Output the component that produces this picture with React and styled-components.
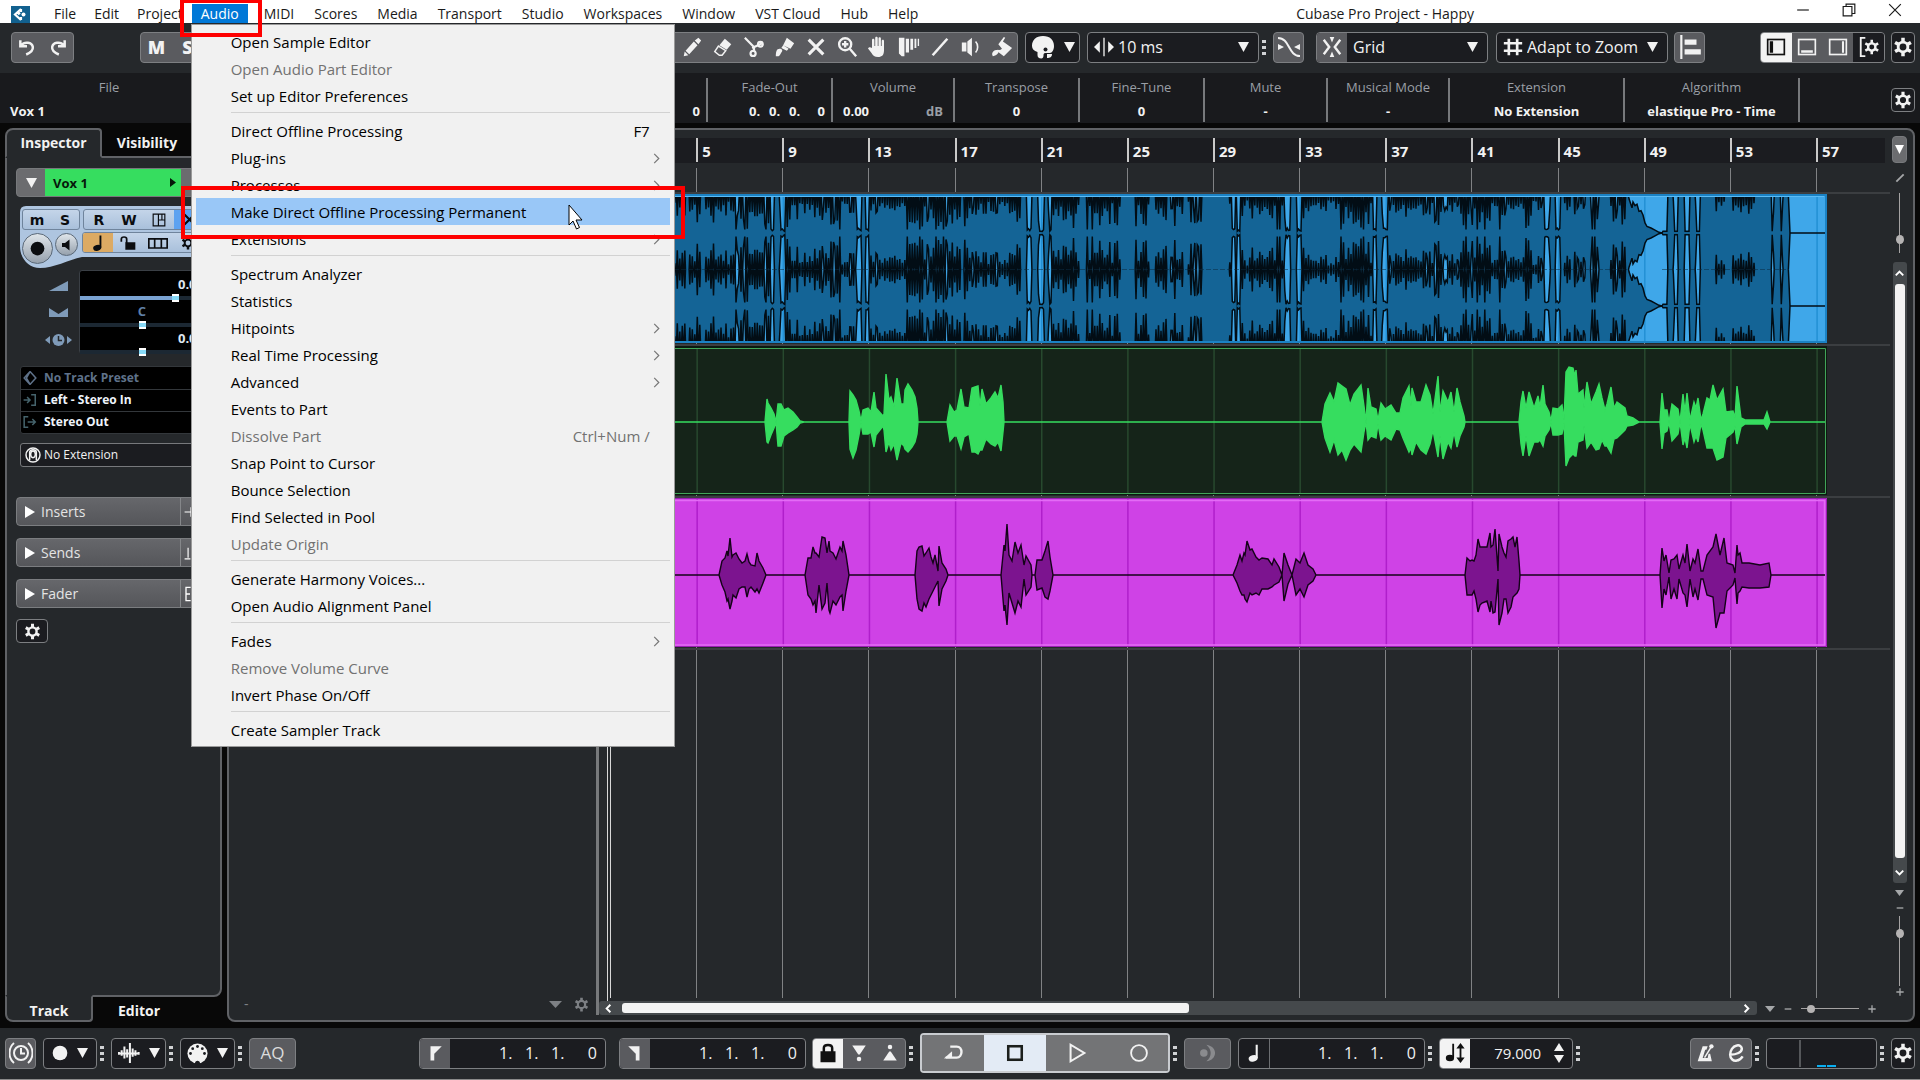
import React from "react";
import styled, { createGlobalStyle, css } from "styled-components";

const Global = createGlobalStyle`
  * { box-sizing: border-box; }
  html, body { margin: 0; height: 100%; overflow: hidden; }
  body { background: #080808; color: #f2f2f2; font: 14px/20px "Open Sans", "Noto Sans", sans-serif; }
  button, select, input { font: inherit; color: inherit; margin: 0; padding: 0; border: 0; background: none; outline: none; }
  svg { display: block; flex: none; }
`;

const panel = "#25282b";
const well = "#1b1c20";
const edge = "#606266";
const rim = "#7d7f82";
const raised = "#5a5b5f";

/* ---------- icons ---------- */

const Icon = ({ size = 20, box = 24, children, fill = "currentColor", stroke = "none", sw = 2 }) => (
  <svg width={size} height={size} viewBox={`0 0 ${box} ${box}`} fill={fill} stroke={stroke} strokeWidth={sw} aria-hidden="true">
    {children}
  </svg>
);
const line = { fill: "none", stroke: "currentColor" };

const Undo = () => <Icon size={20} {...line} sw={3}><path d="M4 4v7h8M5 10c4-5 13-4 14 2 .5 4-3 7-8 9" /></Icon>;
const Redo = () => <Icon size={20} {...line} sw={3}><path d="M20 4v7h-8M19 10c-4-5-13-4-14 2-.5 4 3 7 8 9" /></Icon>;
const Pencil = () => <Icon size={22}><path d="M19 2l3 3-3 4-4-4zM14 6l4 4-9 10-4-4zM4 17l4 4-5 1z" /></Icon>;
const Eraser = () => <Icon size={22}><path d="M14 3l7 6-5 6-8-5z" /><path d="M7 11l8 5-4 5-3 0-5-4z" {...line} strokeWidth="1.6" /></Icon>;
const Scissors = () => <Icon size={22} {...line} sw={2.4}><path d="M2 2l11 11M21 8l-11 5M12 12v5" /><circle cx="19" cy="9" r="2.6" /><circle cx="11" cy="19" r="2.8" /></Icon>;
const Glue = () => <Icon size={22}><path d="M14 2l8 6-4 6-8-4zM10 10l6 4-2 2-6-3zM2 22c0-5 1-8 4-8s4 2 2 4c-1 2-2 4-3 4z" /></Icon>;
const Cross = ({ size = 22 }) => <Icon size={size} {...line} sw={3.4}><path d="M4 4l16 16M20 4L4 20" /></Icon>;
const Zoom = () => <Icon size={22} {...line} sw={2.6}><circle cx="10" cy="9" r="6.6" /><path d="M15 14l7 8M10 5.500v7M6.500 9h7" /></Icon>;
const Hand = () => <Icon size={24}><path d="M6 13V5c0-1.600 2.400-1.600 2.400 0v6h.8V3c0-1.700 2.500-1.700 2.500 0v8h.8V3.500c0-1.600 2.400-1.600 2.400 0V11h.8V6c0-1.600 2.300-1.600 2.300 0v9c0 5-2 7-6 7-3.500 0-5-1.500-6.500-4L2 13.500c1-1.800 2.500-1.300 4-.5z" /></Icon>;
const Comp = () => <Icon size={22}><path d="M1 2h6v20H4L1 19zM8.500 3h3.500v15H8.500zM13.500 3h3v12h-3zM18 3h2v10h-2zM21.500 3h1.500v8h-1.500z" /></Icon>;
const Slash = () => <Icon size={22} {...line} sw={2.8}><path d="M4 21L20 3" /></Icon>;
const Speaker = ({ size = 22 }) => <Icon size={size}><path d="M2 7h5v10H2zM8 6l5-4v20l-5-4z" /><path d="M17 6c3 3 3 9 0 12" {...line} strokeWidth="1.8" /></Icon>;
const Bucket = () => <Icon size={22}><path d="M8 9l6-8 1.500 1L13 6l10 7-9 9-8-6c2-1 4 0 6-2zM2 22c-2-3 0-7 6-7 1 3-1 6-6 7z" /></Icon>;
const Palette = () => <Icon size={24}><path d="M12 1c7 0 11 4 11 10 0 4-2 7-4 7h-5c-1 0-1.500 1-1.500 2s0 3-2 3.500c-3 0-4-1.500-4-3.500v-3C3 16 1 14 1 11 1 5 5 1 12 1z" /><path d="M16 19h5c0 3-2 4-5 4z" /><circle cx="14.500" cy="14.500" r="2" fill={well} /></Icon>;
const Nudge = () => <Icon size={20}><path d="M0 12l7-7v14zM24 12l-7-7v14zM11.200 1h1.600v22h-1.600z" /></Icon>;
const Crossfade = () => <Icon size={24} {...line} sw={2}><path d="M1 3c12 0 10 18 22 18" /><path d="M1 9l6 3-6 3zM23 9l-6 3 6 3z" fill="currentColor" stroke="none" /></Icon>;
const Snap = () => <Icon size={22} {...line} sw={2.600}><path d="M3 4l6 8-6 8M21 4l-6 8 6 8" /><path d="M9.500 1h5L12 7zM9.500 23h5L12 17z" fill="currentColor" stroke="none" /></Icon>;
const Hash = () => <Icon size={20} {...line} sw={3.2}><path d="M7 2v20M17 2v20M1 7.500h22M1 16.500h22" /></Icon>;
const Align = () => <Icon size={26}><path d="M3 1h2v22H3zM7 5h11v5H7zM7 14h15v5H7z" /></Icon>;
const Gear = ({ size = 20 }) => (
  <Icon size={size} {...line} sw={3.400}>
    <circle cx="12" cy="12" r="5.800" />
    <path d="M12 1v4.500M12 18.500v4.500M2.500 6.500l4 2.300M17.500 15.200l4 2.300M2.500 17.500l4-2.300M17.500 8.800l4-2.300" strokeWidth="4.200" />
  </Icon>
);
const ZoneLeft = () => <Icon size={20} {...line} sw={2}><rect x="2" y="3" width="20" height="18" /><path d="M6.500 5v14" strokeWidth="4" /></Icon>;
const ZoneLow = () => <Icon size={20} {...line} sw={2}><rect x="2" y="3" width="20" height="18" /><path d="M5 17.500h14" strokeWidth="3" /></Icon>;
const ZoneRight = () => <Icon size={20} {...line} sw={2}><rect x="2" y="3" width="20" height="18" /><path d="M18 5v14" strokeWidth="2.500" /></Icon>;
const ZoneGear = () => <Icon size={22} {...line} sw={2}><path d="M8 2H3v20h5" /><circle cx="15" cy="12" r="4" strokeWidth="2.600" /><path d="M15 4v4M15 16v4M8 8l3.500 2M18.500 14l3.500 2M8 16l3.500-2M18.500 10l3.500-2" strokeWidth="2.800" /></Icon>;
const Clock = () => <Icon size={24} {...line} sw={2}><circle cx="12" cy="12" r="7" /><path d="M12 7v5.500h4M5 2C-1 7-1 17 5 22M19 2c6 5 6 15 0 20" /></Icon>;
const Dot = () => <Icon size={16}><circle cx="12" cy="12" r="11" /></Icon>;
const Wave = () => <Icon size={22} {...line} sw={2.200}><path d="M1 11v3M4 9v6M7 5v13M10 8v9M13 1v22M16 7v9M19 9v6M22.500 11v3M1 12.500h22" /></Icon>;
const Midi = () => <Icon size={21}><circle cx="12" cy="12" r="11.500" /><path d="M9 24c0-5 6-5 6 0z" fill={well} /><g fill={well}><circle cx="4" cy="12" r="1.600" /><circle cx="6.500" cy="6.500" r="1.600" /><circle cx="12" cy="4" r="1.600" /><circle cx="17.500" cy="6.500" r="1.600" /><circle cx="20" cy="12" r="1.600" /></g></Icon>;
const FlagL = () => <Icon size={18}><path d="M6 3h15L11 13v9H6z" /></Icon>;
const FlagR = () => <Icon size={18}><path d="M18 3H3l10 10v9h5z" /></Icon>;
const Lock = () => <Icon size={20}><path d="M3 10h18v13H3z" /><path d="M7 11V6c0-5 10-5 10 0v5" {...line} strokeWidth="3" /></Icon>;
const PunchIn = () => <Icon size={18}><path d="M3 2h18l-8 12h-2z" /><circle cx="12" cy="20" r="3" /></Icon>;
const PunchOut = () => <Icon size={18}><path d="M3 22h18l-8-12h-2z" /><circle cx="12" cy="4" r="3" /></Icon>;
const Cycle = () => <Icon size={22} {...line} sw={2.6}><path d="M9 5h7c7 0 7 12 0 12H4" /><path d="M2 18l9-8v7z" fill="currentColor" stroke="none" /></Icon>;
const Stop = () => <Icon size={18} {...line} sw={3.400}><rect x="3" y="3" width="18" height="18" /></Icon>;
const Play = () => <Icon size={22} {...line} sw={2.200}><path d="M5 3v18l15-9z" /></Icon>;
const Ring = () => <Icon size={20} {...line} sw={2.200}><circle cx="12" cy="12" r="9.500" /></Icon>;
const Ghost = () => <Icon size={20}><circle cx="7" cy="12" r="4.500" /><path d="M10 2c14 2 14 18 0 20 7-6 7-14 0-20z" /></Icon>;
const Note = ({ size = 20 }) => <Icon size={size}><path d="M14 2h2.500v16h-2.500z" /><ellipse cx="11" cy="18.500" rx="5.500" ry="3.800" transform="rotate(-15 11 18.500)" /></Icon>;
const TempoTrack = () => <Icon size={22}><path d="M9 2h2v15H9z" /><ellipse cx="6.500" cy="17.500" rx="4.500" ry="3.500" /><path d="M18 1l4.500 6H19v10h3.500L18 23l-4.500-6H17V7h-3.500z" /></Icon>;
const Metronome = () => <Icon size={20}><path d="M8 4h6l-1.500 4H11L8 18h6l1-5h2l2 9H2z" /><circle cx="18.500" cy="4" r="2.600" /><path d="M17 5l1.500 1L11 18l-1.500-1z" /></Icon>;
const ClickE = () => <Icon size={20} {...line} sw={3}><path d="M5 14c8 0 14-3 14-7 0-3-3-5-6-4C8 4 5 9 5 14s4 8 8 7c3 0 5-2 7-5" /></Icon>;
const DoubleRing = () => <Icon size={16} {...line} sw={2.200}><circle cx="12" cy="12" r="10.500" /><ellipse cx="12" cy="11" rx="3.500" ry="5" /><path d="M7 20V8c0-5 10-5 10 0v12" /></Icon>;
const Minimise = () => <Icon size={14} {...line} sw={2}><path d="M2 12h20" /></Icon>;
const Restore = () => <Icon size={14} {...line} sw={2}><path d="M2 6h15v16H2zM7 6V2h15v16h-5" /></Icon>;
const Close = () => <Icon size={14} {...line} sw={2}><path d="M2 2l20 20M22 2L2 22" /></Icon>;
const Down = ({ w = 11, h = 10 }) => <svg width={w} height={h} viewBox="0 0 10 10" fill="currentColor" preserveAspectRatio="none" aria-hidden="true"><path d="M0 0h10L5 10z" /></svg>;
const Right = () => <svg width="10" height="12" viewBox="0 0 10 12" fill="currentColor" aria-hidden="true"><path d="M0 0v12l10-6z" /></svg>;
const Chevron = ({ turn = 0, size = 10, sw = 3 }) => <Icon size={size} {...line} sw={sw}><path d="M7 2l10 10L7 22" transform={`rotate(${turn} 12 12)`} /></Icon>;
const Plus = () => <Icon size={8} {...line} sw={4}><path d="M12 1v22M1 12h22" /></Icon>;
const Minus = () => <Icon size={8} {...line} sw={4}><path d="M2 12h20" /></Icon>;
const Logo = () => (
  <svg width="19" height="17" viewBox="0 0 19 17" aria-hidden="true">
    <rect width="19" height="17" fill="#12618f" />
    <path d="M10 3L4 8.500l6 5.500M10 3v3M10 14v-3M7 8.500l2-2" stroke="#fff" strokeWidth="2.200" fill="none" />
    <circle cx="12.500" cy="8.500" r="2" fill="#fff" />
  </svg>
);

/* ---------- shared controls ---------- */

const Shell = styled.div`
  position: relative; display: flex; flex-direction: column; height: 100vh; overflow: hidden;
`;
const Group = styled.div`
  display: flex; align-items: stretch; height: 31px; flex: none; width: ${p => p.$w}px;
  border: 1px solid ${rim}; border-radius: 4px; overflow: hidden;
  background: ${p => (p.$raised ? raised : well)};
`;
const Seg = styled.button`
  display: flex; align-items: center; justify-content: center; flex: ${p => (p.$grow ? 1 : "none")};
  width: ${p => (p.$grow ? "auto" : (p.$w || 31) + "px")}; gap: 9px;
  font-weight: 800; font-size: 18px;
  color: ${p => p.$ink || "#f2f2f2"};
  background: ${p => p.$bg || "transparent"};
`;
const SquareButton = styled.button`
  display: flex; align-items: center; justify-content: center; flex: none;
  width: ${p => p.$w || 24}px; height: ${p => p.$h || 31}px;
  border: 1px solid ${rim}; border-radius: 4px; font-size: 17px;
  color: ${p => p.$ink || "#f2f2f2"}; background: ${p => (p.$raised ? raised : well)};
`;
const DotsBox = styled.span`
  display: grid; gap: 3px; width: 14px; flex: none; padding-left: 3px; align-content: center;
  i { width: 4px; height: 3px; background: #d0d2d4; }
`;
const Dots = () => <DotsBox><i /><i /><i /></DotsBox>;

const SelectLabel = styled.label`
  display: flex; align-items: center; flex: 1; gap: 4px; padding: 0 9px 0 6px;
`;
const Select = styled.select`
  appearance: none; flex: 1; min-width: 0; font-size: 16px; line-height: 20px;
`;
const Pick = ({ icon, label, value }) => (
  <SelectLabel>
    {icon}
    <Select aria-label={label} defaultValue={value}><option>{value}</option></Select>
    <Down />
  </SelectLabel>
);
const Spacer = styled.div` flex: 1; `;
const VGap = styled.div` height: ${p => p.$h}px; flex: none; `;

/* ---------- menu bar ---------- */

const MenuBar = styled.header`
  position: relative; z-index: 5; display: flex; height: 23px; flex: none; align-items: flex-end;
  background: #fff; color: #1a1a1a; padding-left: 11px;
`;
const MenuItems = styled.nav` display: flex; padding-left: 15px; `;
const MenuSlot = styled.div` position: relative; margin-right: ${p => (p.$open ? 6 : 0)}px; `;
const MenuButton = styled.button`
  display: block; height: 19px; padding: 0 ${p => (p.$wide ? 10 : 9)}px; line-height: 18px; white-space: nowrap; font-size: 14px;
  ${p => p.$open && css`background: #0078d7; color: #fff;`}
`;
const Title = styled.h1` margin: 0 0 0 auto; font: inherit; line-height: 19px; font-size: 14px; padding-right: 446px; `;
const WindowButtons = styled.div`
  position: absolute; right: 18px; top: 3px; display: flex; gap: 32px;
  button { display: block; }
`;
const Popup = styled.ul`
  position: absolute; left: -1px; top: 20px; z-index: 6; width: 484px; margin: 0; padding: 3px 4px; list-style: none;
  background: #f1f1f1; border: 1px solid #9a9a9a; color: #000;
`;
const PopupButton = styled.button`
  display: flex; align-items: center; justify-content: space-between; width: 100%; height: 27px; text-align: left;
  padding: 1px 8px 0 35px; font-size: 15px; line-height: 20px;
  color: ${p => (p.disabled ? "#727272" : "#000")};
  background: ${p => (p.$hot ? "#99c7f7" : "transparent")};
  svg { color: #777; }
`;
const Key = styled.span` padding-right: 12px; `;
const Rule = styled.li` height: 8px; margin-left: 35px; background: linear-gradient(#d2d2d2, #d2d2d2) 0 3px / 100% 1px no-repeat; `;

const audioMenu = [
  ["Open Sample Editor"], ["Open Audio Part Editor", "off"], ["Set up Editor Preferences"], null,
  ["Direct Offline Processing", "", "F7"], ["Plug-ins", "sub"], ["Processes", "sub"],
  ["Make Direct Offline Processing Permanent", "hot"], ["Extensions", "sub"], null,
  ["Spectrum Analyzer"], ["Statistics"], ["Hitpoints", "sub"], ["Real Time Processing", "sub"], ["Advanced", "sub"],
  ["Events to Part"], ["Dissolve Part", "off", "Ctrl+Num /"], ["Snap Point to Cursor"], ["Bounce Selection"],
  ["Find Selected in Pool"], ["Update Origin", "off"], null,
  ["Generate Harmony Voices..."], ["Open Audio Alignment Panel"], null,
  ["Fades", "sub"], ["Remove Volume Curve", "off"], ["Invert Phase On/Off"], null,
  ["Create Sampler Track"],
];
const menus = ["File", "Edit", "Project", "Audio", "MIDI", "Scores", "Media", "Transport", "Studio", "Workspaces", "Window", "VST Cloud", "Hub", "Help"];

const AudioPopup = () => (
  <Popup>
    {audioMenu.map((m, i) => m ? (
      <li key={i}>
        <PopupButton disabled={m[1] === "off"} $hot={m[1] === "hot"}>
          {m[0]}
          {m[1] === "sub" && <Chevron size={11} sw={2.600} />}
          {m[2] && <Key>{m[2]}</Key>}
        </PopupButton>
      </li>
    ) : <Rule key={i} />)}
  </Popup>
);

/* ---------- toolbar + info line ---------- */

const Toolbar = styled.div`
  display: flex; align-items: center; height: 50px; flex: none; padding: 0 5px 2px 11px; background: ${panel};
`;
const Gap = styled.span` width: ${p => p.$w}px; flex: none; `;

const InfoLine = styled.div` display: flex; height: 50px; flex: none; background: #191a1d; padding: 5px 5px 2px 0; align-items: center; `;
const InfoCell = styled.div`
  height: 44px; flex: none; width: ${p => p.$w}px; border-right: ${p => (p.$open ? 0 : 2)}px solid #77797c; padding-bottom: 1px;
  display: flex; flex-direction: column; justify-content: space-between; text-align: center; font-size: 13px;
`;
const InfoLabel = styled.span` color: #9a9fa6; line-height: 18px; `;
const InfoValue = styled.span`
  font-weight: 700; line-height: 20px; display: flex; justify-content: ${p => p.$just || "center"};
  padding: 0 ${p => (p.$just === "flex-end" ? 6 : p.$just ? 10 : 0)}px;
  em { font-style: normal; color: #9a9fa6; }
`;
const Digits = styled.span`
  display: flex; justify-content: flex-end; font-size: ${p => p.$size}px; font-weight: ${p => (p.$size > 14 ? 400 : 700)};
  span { width: ${p => p.$step}px; text-align: left; }
  span:last-child { width: ${p => p.$last}px; text-align: right; }
`;
const Position = ({ big, n }) => (
  <Digits $size={big ? 16 : 13} $step={big ? 26 : 20} $last={big ? 20 : 16}>
    <span>{n}.</span><span>{n}.</span><span>{n}.</span><span>0</span>
  </Digits>
);

/* ---------- workspace ---------- */

const Work = styled.main` display: flex; flex: 1; min-height: 0; padding: 5px 5px 6px 5px; gap: 5px; background: #080808; `;

const Left = styled.aside` display: flex; flex-direction: column; width: 217px; flex: none; `;
const Tabs = styled.div` display: flex; flex: none; position: relative; z-index: 1; margin: ${p => (p.$low ? "-2px 0 0" : "0 0 -2px")}; height: ${p => (p.$low ? 27 : 30)}px; `;
const Tab = styled.button`
  font-weight: 700; font-size: 14px; line-height: 18px; width: ${p => p.$w}px; border: 2px solid transparent;
  padding: ${p => (p.$low ? "5px 0 0" : "0 0 1px")};
  ${p => p.$on && css`
    background: ${panel}; border-color: ${edge};
    ${p.$low ? "border-top-color: transparent; border-radius: 0 0 4px 8px;" : "border-bottom-color: transparent; border-radius: 8px 4px 0 0;"}
  `}
`;
const LeftBody = styled.div`
  flex: 1; min-height: 0; background: ${panel}; border: 2px solid ${edge}; border-radius: 0 8px 8px 0;
  padding: 10px 9px; display: flex; flex-direction: column; align-items: stretch;
`;
const TrackHead = styled.div` display: flex; height: 29px; flex: none; border: 1px solid #77797c; border-radius: 4px; overflow: hidden; background: #6b6c6f; `;
const TrackName = styled.div`
  display: flex; align-items: center; justify-content: space-between; width: 136px; padding: 0 5px 0 8px;
  background: #36dd5f; color: #06180a; font-weight: 700; font-size: 13px;
`;
const Strip = styled.div` position: relative; height: 62px; margin: 9px 0 0 4px; flex: none; color: #0b0d10; `;
const StripBack = styled.svg` position: absolute; left: 0; top: 0; `;
const StripRow = styled.div` position: relative; display: flex; gap: 3px; padding: ${p => (p.$second ? "2px 0 0 62px" : "3px 0 0 2px")}; `;
const StripBox = styled.div` display: flex; height: 21px; border: 1px solid #6f849c; border-radius: 3px; overflow: hidden; background: linear-gradient(#c4d5e9, #a9c0db); `;
const StripButton = styled.button`
  display: flex; align-items: center; justify-content: center; width: ${p => p.$w || 30}px;
  font: 700 14px/18px "DejaVu Sans", sans-serif; background: ${p => p.$bg || "transparent"};
  & + & { border-left: ${p => (p.$line ? "1px solid #6f849c" : 0)}; }
`;
const Round = styled.button`
  position: absolute; left: ${p => p.$x}px; top: ${p => p.$y}px; width: ${p => p.$d}px; height: ${p => p.$d}px; border-radius: 50%;
  display: flex; align-items: center; justify-content: center;
  border: 1px solid #5b6978; background: linear-gradient(#dfe5ea, #96a1ad);
`;
const Faders = styled.div` display: flex; margin: 2px 0 0 4px; flex: none; `;
const FaderIcons = styled.div` width: 60px; display: grid; grid-template-rows: repeat(3, 27px); align-items: center; justify-content: end; justify-items: center; padding: 2px 7px 0 0; color: #7f9bb9; `;
const FaderBox = styled.div` flex: 1; background: #000; border: 1px solid #3a3f45; border-radius: 3px; height: 84px; padding: 3px 6px 0 0; `;
const FaderRow = styled.div` height: 27px; display: flex; flex-direction: column; align-items: center; font-weight: 700; font-size: 13px; color: ${p => p.$ink || "#dfe7f0"}; `;
const FaderText = styled.span` height: 18px; line-height: 20px; width: 124px; text-align: ${p => p.$align || "center"}; `;
const Fader = styled.input.attrs({ type: "range" })`
  appearance: none; width: 124px; height: 8px; margin-top: 2px;
  &::-webkit-slider-runnable-track { height: 4px; background: linear-gradient(90deg, #7aa3d2 ${p => p.$fill}%, #1c2833 ${p => p.$fill}%); }
  &::-webkit-slider-thumb { appearance: none; width: 7px; height: 8px; margin-top: -2px; background: linear-gradient(#fff 25%, #86d9f7 25% 75%, #fff 75%); }
`;
const Routing = styled.div` margin: 12px 0 0 4px; flex: none; border: 1px solid #33373b; border-radius: 3px; background: #000; `;
const Route = styled.div`
  display: flex; align-items: center; gap: 7px; height: 22px; padding: 0 0 1px 2px; font-size: 12px; font-weight: 700;
  color: ${p => (p.$dim ? "#5f728a" : "#eef4fb")};
  & + & { border-top: 1px solid #33373b; }
  svg { color: ${p => (p.$dim ? "#5f728a" : "#45636c")}; }
`;
const Extension = styled.button` display: flex; align-items: center; gap: 3px; height: 24px; margin: 9px 0 0 4px; padding: 0 0 1px 4px; flex: none; font-size: 12px; border: 1px solid #77797c; border-radius: 3px; background: ${well}; `;
const Sections = styled.div` display: grid; gap: 12px; margin-top: 30px; flex: none; `;
const Section = styled.button`
  display: flex; align-items: center; height: 29px; border: 1px solid #7b7d80; border-radius: 4px; background: linear-gradient(#66676b, #55565a); padding-left: 8px; gap: 6px; font-size: 14px; color: #e4e4e4;
  svg { color: #fff; }
  b { margin-left: auto; width: 30px; height: 27px; border-left: 1px solid #85878a; display: flex; align-items: center; padding-left: 3px; }
`;
const GearBox = styled(SquareButton)` margin-top: 11px; `;

const Arrange = styled.section` display: flex; flex: 1; min-width: 0; background: ${panel}; border: 2px solid ${edge}; border-radius: 8px; padding-bottom: 5px; `;
const TrackList = styled.div` width: 370px; flex: none; border-right: 3px solid #77797b; display: flex; align-items: flex-end; padding: 0 7px 0 15px; color: #7d8084; `;
const ListFoot = styled.div` display: flex; width: 100%; align-items: center; gap: 12px; height: 22px; `;
const Time = styled.div` flex: 1; min-width: 0; display: flex; flex-direction: column; padding-top: 8px; `;
const TimeRow = styled.div` display: flex; flex: 1; min-height: 0; `;
const TimeMain = styled.div` flex: 1; min-width: 0; display: flex; flex-direction: column; `;
const BarGrid = css` display: grid; grid-template-columns: repeat(14, 1fr) ${p => p.$tail}px; `;
const Ruler = styled.div`
  ${BarGrid} height: 25px; margin: 0 5px 0 0; padding-left: 11px; background: ${well}; flex: none;
  span { height: 24px; border-left: 2px solid #c9c9c9; padding-left: 4px; font-weight: 700; font-size: 15px; line-height: 26px; }
  span:first-child { border: 0; }
`;
const Canvas = styled.div` position: relative; flex: 1; margin-top: 5px; padding-top: 24px; `;
const Lines = styled.div`
  ${BarGrid} position: absolute; inset: 0; padding-left: 11px;
  i { border-left: 1px solid #808284; }
  i:first-child { border-left: 1px solid #d8d8d8; }
`;
const Playhead = styled.div` position: absolute; left: 8px; top: 0; bottom: -3px; width: 1px; background: #d8d8d8; `;
const Lane = styled.div` position: relative; height: 152px; border-top: 2px solid #3b3e41; padding: 0 63px 0 12px; &:last-child { height: 2px; } `;
const Clip = styled.svg` width: 100%; height: 149px; `;
const SideBar = styled.div` width: 23px; flex: none; display: flex; flex-direction: column; align-items: center; color: #a5a7a9; padding: 0 4px 2px 0; `;
const MarkerButton = styled.button` width: 15px; height: 27px; margin-top: -2px; flex: none; border: 1px solid #77797c; border-radius: 4px; background: #6b6c6f; display: flex; align-items: center; justify-content: center; color: #fff; `;
const VRange = styled.input.attrs({ type: "range" })`
  appearance: none; writing-mode: vertical-lr; width: 8px; height: ${p => p.$len}px; flex: none;
  background: linear-gradient(#a5a3a3, #a5a3a3) center / 1px 100% no-repeat;
  &::-webkit-slider-thumb { appearance: none; width: 8px; height: 9px; border-radius: 50%; background: #b5b3b3; }
`;
const HRange = styled.input.attrs({ type: "range" })`
  appearance: none; width: 58px; height: 9px;
  background: linear-gradient(#a5a3a3, #a5a3a3) center / 100% 1px no-repeat;
  &::-webkit-slider-thumb { appearance: none; width: 8px; height: 8px; border-radius: 50%; background: #b5b3b3; }
`;
const VScroll = styled.div`
  flex: 1; width: 14px; background: #45494c; border-radius: 3px; display: flex; flex-direction: column; align-items: center; color: #fff;
  button { height: 22px; display: flex; align-items: center; justify-content: center; }
`;
const VThumb = styled.div` flex: 1; width: 10px; margin-bottom: 3px; border-radius: 3px; background: #f3f3f3; `;
const HBar = styled.div` display: flex; align-items: center; margin-top: 3px; height: 14px; flex: none; color: #a5a7a9; `;
const HScroll = styled.div`
  flex: 1; height: 14px; background: #45494c; border-radius: 3px; display: flex; align-items: center; color: #fff; justify-content: space-between; padding: 0 5px;
  button { width: 10px; display: flex; }
`;
const HTrack = styled.div` flex: 1; padding: 0 8px; `;
const HThumb = styled.div` width: 51%; height: 10px; border-radius: 3px; background: #f3f3f3; `;
const HZoom = styled.div` display: flex; align-items: center; width: 156px; padding: 1px 37px 0 8px; justify-content: space-between; `;

/* ---------- waveforms: [x, above, below] ---------- */

const lead = [
  [0,0,0],[154,0,0],[156,23,20],[157,19,21],[160,14,13],[163,8,6],[165,0,0],[167,18,24],[170,18,24],[173,12,14],[177,14,11],[182,10,8],[186,5,5],[189,1,1],[193,0,0],
  [238,0,0],[239,31,27],[242,27,36],[245,22,28],[248,11,13],[250,1,1],[252,12,12],[257,14,12],[260,10,10],[263,30,25],[265,14,13],[272,6,4],[273,8,8],[275,48,30],[278,22,20],[280,25,28],[283,15,22],[286,44,38],[290,18,21],[293,18,24],[294,32,27],[297,38,30],[301,32,25],[304,25,20],[306,14,12],[307,0,0],
  [336,0,0],[339,17,19],[343,10,14],[346,12,14],[350,33,27],[353,15,15],[358,14,12],[361,34,30],[364,35,30],[367,36,32],[369,16,28],[371,33,28],[375,18,17],[380,24,22],[384,30,24],[387,24,20],[390,37,29],[392,20,10],[393,0,0],
  [711,0,0],[714,18,16],[719,29,30],[723,20,18],[727,39,33],[731,36,28],[735,33,38],[739,17,28],[743,28,22],[750,37,30],[753,16,10],[755,0,0],[757,34,18],[760,15,14],[765,13,16],[767,2,2],[770,19,18],[774,13,14],[780,17,18],[785,9,7],[789,9,8],[792,24,16],[798,36,30],[800,16,26],[801,34,33],[805,20,20],[810,20,28],[815,37,32],[819,27,22],[822,8,8],[827,46,35],[829,10,14],[832,31,37],[837,20,20],[840,30,26],[843,10,10],[846,34,25],[849,20,14],[853,6,5],[854,0,0],
  [908,0,0],[910,20,22],[912,31,34],[915,14,14],[918,30,34],[923,14,20],[927,26,20],[929,15,18],[932,37,24],[934,18,14],[938,10,8],[940,1,1],[942,14,13],[947,13,13],[951,17,12],[953,2,1],[955,50,44],[958,55,36],[962,54,32],[964,46,34],[965,52,34],[967,28,20],[972,32,18],[973,14,4],[976,40,26],[980,18,20],[985,30,28],[988,38,27],[991,24,18],[994,12,24],[996,18,24],[1000,35,31],[1003,14,17],[1006,20,16],[1014,14,8],[1016,6,4],[1022,4,3],[1028,0,0],
  [1049,0,0],[1051,29,27],[1053,12,11],[1056,12,9],[1058,0,0],[1061,18,19],[1067,13,12],[1069,0,0],[1072,28,23],[1074,10,16],[1076,29,26],[1079,2,2],[1083,20,20],[1085,14,14],[1087,24,20],[1090,2,2],[1092,8,8],[1096,24,26],[1099,22,26],[1102,37,26],[1106,22,38],[1112,33,35],[1115,10,16],[1122,11,10],[1124,4,4],[1126,36,22],[1130,4,5],[1134,2,2],[1153,2,2],[1156,10,7],[1159,0,0],[1214,0,0],
];
const backing = [
  [0,0,0],[108,0,0],[111,14,10],[114,17,17],[116,24,26],[117,19,24],[119,37,34],[121,18,26],[122,20,20],[125,22,23],[128,16,14],[131,12,12],[134,14,12],[136,21,22],[138,13,14],[140,10,12],[144,9,17],[146,22,14],[148,14,18],[152,7,8],[155,0,0],
  [194,0,0],[197,17,20],[200,17,24],[202,28,30],[204,22,26],[205,22,38],[208,18,10],[211,38,34],[214,37,28],[216,22,8],[218,34,35],[219,24,38],[222,22,26],[225,16,30],[229,28,22],[231,24,20],[232,34,36],[235,20,16],[238,0,0],
  [304,0,0],[306,24,24],[308,28,34],[311,29,36],[313,19,28],[315,22,32],[318,27,24],[320,18,20],[322,12,16],[324,20,12],[327,4,6],[328,29,31],[331,12,14],[335,6,6],[337,0,0],
  [390,0,0],[393,30,36],[394,24,30],[396,51,50],[398,20,18],[401,14,28],[404,33,38],[407,22,26],[410,30,32],[413,10,4],[415,19,20],[420,10,12],[421,0,0],[424,0,0],[426,15,15],[431,15,13],[434,24,22],[437,34,24],[439,18,16],[442,0,0],
  [622,0,0],[626,10,8],[629,20,16],[631,14,20],[633,22,20],[634,20,24],[636,34,27],[639,25,18],[641,26,20],[645,18,18],[648,15,20],[651,17,14],[657,16,14],[661,10,12],[663,16,10],[668,8,7],[671,0,0],[673,22,26],[677,10,9],[681,0,0],[685,16,20],[689,12,14],[693,22,22],[697,10,10],[702,6,6],[705,0,0],
  [854,0,0],[856,17,20],[859,14,20],[861,15,20],[863,14,16],[865,20,24],[867,36,37],[869,28,30],[871,28,28],[876,28,26],[879,42,37],[880,28,26],[882,30,38],[884,46,37],[887,4,4],[888,41,50],[891,28,38],[893,22,24],[895,18,24],[897,34,38],[900,36,32],[902,38,22],[904,28,20],[906,38,18],[908,14,14],[909,0,0],
  [1049,0,0],[1051,27,33],[1053,14,14],[1055,20,20],[1058,2,2],[1060,15,24],[1063,16,14],[1066,20,24],[1068,6,4],[1072,20,18],[1074,12,20],[1076,31,32],[1079,4,4],[1082,16,22],[1084,12,14],[1087,26,25],[1090,4,4],[1092,4,4],[1096,20,20],[1102,28,22],[1105,41,53],[1109,20,38],[1113,37,38],[1116,12,16],[1122,10,10],[1124,2,3],[1126,30,29],[1127,20,18],[1129,22,16],[1131,12,12],[1138,12,13],[1149,10,13],[1158,12,12],[1160,0,0],[1214,0,0],
];
const outline = (pts, mid) =>
  "M" + pts.map(p => `${p[0]} ${mid - p[1]}`).join("L") + "L" + [...pts].reverse().map(p => `${p[0]} ${mid + p[2]}`).join("L") + "Z";

/* The dense stereo mix: silent gaps, quiet stretches without dips, and a seeded dip pattern elsewhere. */
const gaps = [[159,163],[169,174],[246,250],[255,258],[416,421],[428,433],[438,440],[621,624],[626,629],[675,679],[686,691],[762,766],[772,777],[933,938],[945,949],[1052,1056],[1063,1067],[1074,1078],[1085,1089],[1160,1162],[1169,1171]];
const solid = [[75,78],[90,94],[164,168],[251,254],[350,353],[411,415],[422,427],[434,437],[468,475],[511,524],[538,544],[556,559],[572,577],[592,618],[680,685],[767,771],[939,944],[950,953],[960,963],[974,979],[990,999],[1057,1062],[1068,1073],[1079,1084],[1090,1105],[1115,1122],[1143,1159],[1163,1168],[1172,1178]];
const fade = [[1018,.95],[1021,.7],[1022,.86],[1024,.76],[1026,.8],[1028,.6],[1030,.62],[1032,.5],[1034,.28],[1036,.18],[1040,.14],[1044,.08],[1048,.02],[1051,0]];
const inside = (list, x) => list.some(([a, b]) => x >= a && x <= b);
const buildMix = seed => {
  let s = seed;
  const rnd = () => ((s = (s * 16807) % 2147483647) / 2147483647);
  const pts = [];
  let low = false, level = 0.6;
  for (let x = 0; x < 1016; x += 1.25) {
    if (inside(gaps, x)) { pts.push([x, 0.04 + rnd() * 0.1]); low = true; continue; }
    if (inside(solid, x)) { pts.push([x, 1.4]); low = false; continue; }
    if (rnd() < 0.12) level = 0.35 + rnd() * 0.55;
    low = low ? rnd() < 0.1 : true;
    pts.push([x, low ? Math.max(0.1, 1 - level * (0.25 + rnd() * 0.95)) : 1.4]);
  }
  fade.forEach(p => pts.push(p));
  for (let x = 1052; x < 1178; x += 1.3) {
    if (inside(gaps, x)) pts.push([x, 0.05]);
    else if (inside(solid, x)) pts.push([x, 1.4]);
    else { low = !low; pts.push([x, low ? 0.5 + rnd() * 0.4 : 1.4]); }
  }
  pts.push([1179, 0], [1214, 0]);
  return pts.map(([x, a]) => [+x.toFixed(1), +(a * 36).toFixed(1), +(a * 36).toFixed(1)]);
};
const mix = buildMix(90210);
const bars = Array.from({ length: 14 }, (_, i) => (i + 1) * 86.15);

const MixClip = () => (
  <Clip viewBox="0 0 1216 149" preserveAspectRatio="none" role="img" aria-label="Stereo mix waveform">
    <clipPath id="upper"><rect x="0" y="2" width="1214" height="73" /></clipPath>
    <clipPath id="lower"><rect x="0" y="75" width="1214" height="73" /></clipPath>
    <rect width="1216" height="149" fill="#3fa7e9" />
    {bars.map(x => <path key={x} d={`M${x} 0V149`} stroke="#2390d4" strokeWidth="1.500" />)}
    <g fill="#146496" stroke="#020d15" strokeWidth="1.500">
      <path d={outline(mix, 39)} clipPath="url(#upper)" />
      <path d={outline(mix, 112)} clipPath="url(#lower)" />
    </g>
    <path d="M0 75.500H1016M1051 75.500H1178" stroke="#0a2a40" strokeDasharray="5 2" opacity=".5" />
    <path d="M0 1H1215V148H0" fill="none" stroke="#1b82c4" strokeWidth="2" />
    <path d="M0 2.500H1213" stroke="#5cbcf5" />
  </Clip>
);
const LeadClip = () => (
  <Clip viewBox="0 0 1216 149" preserveAspectRatio="none" role="img" aria-label="Vox 1 waveform">
    <rect width="1216" height="149" fill="#0b1a0f" />
    <rect width="1214" height="146" y="2" fill="#152419" />
    {bars.map(x => <path key={x} d={`M${x} 3V147`} stroke="#27492e" strokeWidth="1.500" />)}
    <path d="M0 2.500H1214.500V147.500H0" fill="none" stroke="#41a558" />
    <path d={outline(lead, 76)} fill="#36dd5f" stroke="#36dd5f" strokeWidth="1.400" />
  </Clip>
);
const BackingClip = () => (
  <Clip viewBox="0 0 1216 149" preserveAspectRatio="none" role="img" aria-label="Backing vocal waveform">
    <rect width="1216" height="149" fill="#cf42e6" />
    {bars.map(x => <path key={x} d={`M${x} 0V149`} stroke="#b01fcb" strokeWidth="1.500" />)}
    <path d="M0 2.500H1214M0 147H1214M1213.500 2V147" stroke="#e36bf5" strokeWidth="1.500" />
    <path d="M0 .5H1215.500V148.500H0" fill="none" stroke="#9a1fb2" />
    <path d={outline(backing, 77)} fill="#7c148f" stroke="#140318" strokeWidth="1.400" />
  </Clip>
);

/* ---------- transport ---------- */

const Transport = styled.footer` display: flex; align-items: center; height: 52px; flex: none; padding: 0 5px 1px 5px; background: ${panel}; border-bottom: 1px solid #8a8a8a; `;
const Locator = styled.div` flex: 1; display: flex; align-items: center; justify-content: flex-end; padding-right: 8px; border-left: ${p => (p.$line ? "1px solid #6c6e71" : 0)}; `;
const Main = styled.div`
  display: flex; width: 250px; height: 40px; flex: none; border: 2px solid #c9ccd0; border-radius: 4px; overflow: hidden;
`;
const Tempo = styled.input` flex: 1; min-width: 0; font-size: 15px; text-align: right; padding-right: 5px; `;
const Spin = styled.span` display: grid; gap: 4px; align-content: center; justify-items: center; width: 26px; svg:first-child { transform: rotate(180deg); } `;
const Meter = styled.div` width: 111px; height: 31px; border: 1px solid ${rim}; border-radius: 4px; background: ${well}; display: flex; gap: 1px; align-items: flex-end; padding: 1px 1px 1px 32px; flex: none; `;
const MeterLine = styled.i` width: 2px; height: 27px; background: #55575a; margin-right: 15px; `;
const MeterBar = styled.i` width: 9px; height: 2px; background: #0aaef0; `;

const Mark = styled.div`
  position: absolute; z-index: 10; pointer-events: none; border: 4px solid #fe0000;
  left: ${p => p.$x}px; top: ${p => p.$y}px; width: ${p => p.$w}px; height: ${p => p.$h}px;
`;
const Pointer = styled.svg` position: absolute; z-index: 11; left: 568px; top: 204px; `;

const tools = [null, null, Pencil, Eraser, Scissors, Glue, Cross, Zoom, Hand, Comp, Slash, Speaker, Bucket];
const toolNames = ["Select", "Range", "Draw", "Erase", "Split", "Glue", "Mute", "Zoom", "Hand", "Comp", "Line", "Play", "Colour"];

export default function App() {
  return (
    <Shell>
      <Global />
      <MenuBar>
        <Logo />
        <MenuItems>
          {menus.map((m, i) => (
            <MenuSlot key={m} $open={m === "Audio"}>
              <MenuButton $open={m === "Audio"} $wide={i > 3}>{m}</MenuButton>
              {m === "Audio" && <AudioPopup />}
            </MenuSlot>
          ))}
        </MenuItems>
        <Title>Cubase Pro Project - Happy</Title>
        <WindowButtons>
          <button aria-label="Minimise"><Minimise /></button>
          <button aria-label="Restore"><Restore /></button>
          <button aria-label="Close"><Close /></button>
        </WindowButtons>
      </MenuBar>

      <Toolbar>
        <Group $raised $w={63}><Seg $grow aria-label="Undo"><Undo /></Seg><Seg $grow aria-label="Redo"><Redo /></Seg></Group>
        <Gap $w={66} />
        <Group $raised $w={188}><Seg>M</Seg><Seg>S</Seg></Group>
        <Gap $w={285} />
        <Group $raised $w={405}>
          {tools.map((T, i) => <Seg key={i} aria-label={toolNames[i]}>{T && <T />}</Seg>)}
        </Group>
        <Gap $w={7} />
        <Group $w={55}><Seg $grow aria-label="Colour"><Palette /><Down /></Seg></Group>
        <Gap $w={7} />
        <Group $w={172}><Pick icon={<Nudge />} label="Nudge" value="10 ms" /></Group>
        <Dots />
        <SquareButton $w={31} $raised aria-label="Crossfade"><Crossfade /></SquareButton>
        <Gap $w={12} />
        <Group $w={172}><Seg $w={30} $bg={raised} aria-label="Snap"><Snap /></Seg><Pick label="Snap type" value="Grid" /></Group>
        <Gap $w={8} />
        <Group $w={172}><Pick icon={<Hash />} label="Grid type" value="Adapt to Zoom" /></Group>
        <Gap $w={6} />
        <SquareButton $w={31} $raised aria-label="Align"><Align /></SquareButton>
        <Spacer />
        <Group $raised $w={125}>
          <Seg $grow $bg="#f3f3f3" $ink="#111" aria-label="Left zone"><ZoneLeft /></Seg>
          <Seg $grow aria-label="Lower zone"><ZoneLow /></Seg>
          <Seg $grow aria-label="Right zone"><ZoneRight /></Seg>
          <Seg $grow $bg={well} aria-label="Window layout"><ZoneGear /></Seg>
        </Group>
        <Gap $w={6} />
        <SquareButton aria-label="Toolbar setup"><Gear /></SquareButton>
      </Toolbar>

      <InfoLine>
        <InfoCell $w={218} $open><InfoLabel>File</InfoLabel><InfoValue $just="flex-start">Vox 1</InfoValue></InfoCell>
        <InfoCell $w={122} /><InfoCell $w={121} /><InfoCell $w={121} />
        <InfoCell $w={126}><InfoLabel>Fade-In</InfoLabel><InfoValue $just="flex-end"><Position n={0} /></InfoValue></InfoCell>
        <InfoCell $w={125}><InfoLabel>Fade-Out</InfoLabel><InfoValue $just="flex-end"><Position n={0} /></InfoValue></InfoCell>
        <InfoCell $w={122}><InfoLabel>Volume</InfoLabel><InfoValue $just="space-between">0.00 <em>dB</em></InfoValue></InfoCell>
        <InfoCell $w={125}><InfoLabel>Transpose</InfoLabel><InfoValue>0</InfoValue></InfoCell>
        <InfoCell $w={125}><InfoLabel>Fine-Tune</InfoLabel><InfoValue>0</InfoValue></InfoCell>
        <InfoCell $w={123}><InfoLabel>Mute</InfoLabel><InfoValue>-</InfoValue></InfoCell>
        <InfoCell $w={122}><InfoLabel>Musical Mode</InfoLabel><InfoValue>-</InfoValue></InfoCell>
        <InfoCell $w={175}><InfoLabel>Extension</InfoLabel><InfoValue>No Extension</InfoValue></InfoCell>
        <InfoCell $w={175}><InfoLabel>Algorithm</InfoLabel><InfoValue>elastique Pro - Time</InfoValue></InfoCell>
        <Spacer />
        <SquareButton $h={24} aria-label="Info line setup"><Gear size={18} /></SquareButton>
      </InfoLine>

      <Work>
        <Left>
          <Tabs><Tab $on $w={97}>Inspector</Tab><Tab $w={90}>Visibility</Tab></Tabs>
          <LeftBody>
            <TrackHead><Seg $w={28} aria-label="Show track settings"><Down /></Seg><TrackName>Vox 1 <svg width="6" height="9" viewBox="0 0 6 9"><path d="M0 0v9l6-4.500z" fill="#06180a" /></svg></TrackName></TrackHead>
            <Strip>
              <StripBack width="190" height="62" viewBox="0 0 190 62"><path d="M6 0H190V51H62C48 54 34 62 20 62 8 62 0 52 0 40V6Q0 0 6 0z" fill="#aec5e0" /></StripBack>
              <StripRow>
                <StripBox><StripButton $w={28} $line>m</StripButton><StripButton $w={28} $line>S</StripButton></StripBox>
                <StripBox>
                  <StripButton>R</StripButton><StripButton>W</StripButton>
                  <StripButton aria-label="Lanes"><Icon size={14} {...line} sw={2}><path d="M2 2h20v20H2zM11 2v20M11 12h11M17 2v10" /></Icon></StripButton>
                  <StripButton $bg="#5da2f0" aria-label="Freeze"><Cross size={15} /></StripButton>
                </StripBox>
              </StripRow>
              <StripRow $second>
                <StripBox>
                  <StripButton $bg="#dcaa63" aria-label="Musical time base"><Note size={18} /></StripButton>
                  <StripButton aria-label="Lock"><Icon size={16}><path d="M8 11h15v11H8z" /><path d="M2 10V6c0-4 8-4 8 0v6" {...line} strokeWidth="2.600" /></Icon></StripButton>
                  <StripButton aria-label="Channels"><Icon size={20} {...line} sw={2}><path d="M1 7h22v11H1zM8 7v11M16 7v11" /></Icon></StripButton>
                  <StripButton aria-label="Options"><Gear size={14} /></StripButton>
                </StripBox>
              </StripRow>
              <Round $x={2} $y={27} $d={31} aria-label="Record enable"><Icon size={15}><circle cx="12" cy="12" r="11" /></Icon></Round>
              <Round $x={35} $y={27} $d={23} aria-label="Monitor"><Icon size={12}><path d="M2 8h6l9-7v22l-9-7H2z" /></Icon></Round>
            </Strip>
            <Faders>
              <FaderIcons>
                <svg width="19" height="10" viewBox="0 0 19 10" fill="currentColor"><path d="M0 10L19 0v10z" /></svg>
                <svg width="19" height="9" viewBox="0 0 19 9" fill="currentColor"><path d="M0 0l9.500 6L19 0v9H0z" /></svg>
                <svg width="27" height="12" viewBox="0 0 27 12" fill="currentColor"><path d="M0 6l5-4v8zM27 6l-5-4v8z" /><circle cx="13.500" cy="6" r="6" /><path d="M13.500 2v4.500h3.500" stroke={panel} fill="none" strokeWidth="1.500" /></svg>
              </FaderIcons>
              <FaderBox>
                <FaderRow><FaderText $align="right">0.00</FaderText><Fader aria-label="Volume" defaultValue={79} $fill={78} /></FaderRow>
                <FaderRow $ink="#5f7fa6"><FaderText>C</FaderText><Fader aria-label="Pan" defaultValue={50} $fill={0} /></FaderRow>
                <FaderRow><FaderText $align="right">0.00</FaderText><Fader aria-label="Delay" defaultValue={50} $fill={0} /></FaderRow>
              </FaderBox>
            </Faders>
            <Routing>
              <Route $dim><Icon size={14} {...line} sw={2.600}><path d="M12 1l10 11-10 11L2 12zM12 1L6 12l6 11" /></Icon>No Track Preset</Route>
              <Route><Icon size={14} {...line} sw={2.600}><path d="M1 12h10M7 7l5 5-5 5M14 3h7v18h-7" /></Icon>Left - Stereo In</Route>
              <Route><Icon size={14} {...line} sw={2.600}><path d="M9 3H2v18h7M8 12h13M16 7l5 5-5 5" /></Icon>Stereo Out</Route>
            </Routing>
            <Extension><DoubleRing />No Extension</Extension>
            <Sections>
              <Section><Right />Inserts<b><Icon size={14} {...line} sw={2}><path d="M1 12h22M12 4v16" /></Icon></b></Section>
              <Section><Right />Sends<b><Icon size={14} {...line} sw={2}><path d="M1 22h10M7 3v17" /></Icon></b></Section>
              <Section><Right />Fader<b><Icon size={16} {...line} sw={2}><path d="M10 2H3v20h7M3 12h6" /></Icon></b></Section>
            </Sections>
            <GearBox $w={32} $h={24} aria-label="Inspector setup"><Gear size={17} /></GearBox>
          </LeftBody>
          <Tabs $low><Tab $on $low $w={88}>Track</Tab><Tab $low $w={92}>Editor</Tab></Tabs>
        </Left>

        <Arrange>
          <TrackList><ListFoot>-<Spacer /><Down w={13} h={7} /><Gear size={15} /></ListFoot></TrackList>
          <Time>
            <TimeRow>
              <TimeMain>
                <Ruler $tail={69}>{Array.from({ length: 15 }, (_, i) => <span key={i}>{i ? 1 + i * 4 : ""}</span>)}</Ruler>
                <Canvas>
                  <Lines $tail={74}>{Array.from({ length: 15 }, (_, i) => <i key={i} />)}</Lines>
                  <Playhead />
                  <Lane><MixClip /></Lane>
                  <Lane><LeadClip /></Lane>
                  <Lane><BackingClip /></Lane>
                  <Lane />
                </Canvas>
              </TimeMain>
              <SideBar>
                <MarkerButton aria-label="Marker list"><Down w={9} h={9} /></MarkerButton>
                <VGap $h={4} />
                <Icon size={22} {...line} sw={2}><path d="M8 16l8-8" /></Icon>
                <VGap $h={4} />
                <VRange $len={60} aria-label="Waveform zoom" defaultValue={82} />
                <VGap $h={9} />
                <VScroll>
                  <button aria-label="Scroll up"><Chevron turn={-90} size={9} sw={5} /></button>
                  <VThumb />
                  <button aria-label="Scroll down"><Chevron turn={90} size={9} sw={5} /></button>
                </VScroll>
                <VGap $h={7} />
                <Down w={9} h={6} />
                <VGap $h={8} />
                <Minus />
                <VGap $h={4} />
                <VRange $len={70} aria-label="Vertical zoom" defaultValue={22} />
                <VGap $h={2} />
                <Plus />
              </SideBar>
            </TimeRow>
            <HBar>
              <HScroll>
                <button aria-label="Scroll left"><Chevron turn={180} size={9} sw={5} /></button>
                <HTrack><HThumb /></HTrack>
                <button aria-label="Scroll right"><Chevron size={9} sw={5} /></button>
              </HScroll>
              <HZoom><Down w={10} h={6} /><Minus /><HRange aria-label="Horizontal zoom" defaultValue={12} /><Plus /></HZoom>
            </HBar>
          </Time>
        </Arrange>
      </Work>

      <Transport>
        <SquareButton $w={31} $raised aria-label="Constrain delay"><Clock /></SquareButton>
        <Gap $w={7} />
        <Group $w={54}><Seg $grow aria-label="Record mode"><Dot /><Down /></Seg></Group>
        <Dots />
        <Group $w={55}><Seg $grow aria-label="Audio record mode"><Wave /><Down /></Seg></Group>
        <Dots />
        <Group $w={55}><Seg $grow aria-label="MIDI record mode"><Midi /><Down /></Seg></Group>
        <Dots />
        <SquareButton $w={47} $raised $ink="#dcdcdc">AQ</SquareButton>
        <Gap $w={123} />
        <Group $w={187}><Seg $w={30} $bg={raised} aria-label="Left locator"><FlagL /></Seg><Locator><Position big n={1} /></Locator></Group>
        <Gap $w={13} />
        <Group $w={187}><Seg $w={30} $bg={raised} aria-label="Right locator"><FlagR /></Seg><Locator><Position big n={1} /></Locator></Group>
        <Gap $w={6} />
        <Group $raised $w={94}><Seg $w={30} $bg="#f3f3f3" $ink="#111" aria-label="Lock punch"><Lock /></Seg><Seg $grow aria-label="Punch in"><PunchIn /></Seg><Seg $grow aria-label="Punch out"><PunchOut /></Seg></Group>
        <Dots />
        <Main>
          <Seg $w={62} $bg="#737476" aria-label="Cycle"><Cycle /></Seg>
          <Seg $w={62} $bg="#e3ebf5" $ink="#1c1f1c" aria-label="Stop"><Stop /></Seg>
          <Seg $w={62} $bg="#737476" aria-label="Play"><Play /></Seg>
          <Seg $w={62} $bg="#737476" aria-label="Record"><Ring /></Seg>
        </Main>
        <Dots />
        <SquareButton $w={47} $raised $ink="#8a8b8e" aria-label="Night mode"><Ghost /></SquareButton>
        <Gap $w={7} />
        <Group $w={187}><Seg $w={30} aria-label="Time format"><Note /></Seg><Locator $line><Position big n={1} /></Locator></Group>
        <Dots />
        <Group $w={134}><Seg $w={30} $bg="#f3f3f3" $ink="#111" aria-label="Tempo track"><TempoTrack /></Seg><Tempo aria-label="Tempo" defaultValue="79.000" /><Spin><Down w={10} h={8} /><Down w={10} h={8} /></Spin></Group>
        <Dots />
        <Spacer />
        <Group $raised $w={62}><Seg $grow aria-label="Metronome"><Metronome /></Seg><Seg $grow aria-label="Metronome setup"><ClickE /></Seg></Group>
        <Dots />
        <Meter><MeterLine /><MeterBar /><MeterBar /></Meter>
        <Dots />
        <SquareButton aria-label="Transport setup"><Gear /></SquareButton>
      </Transport>

      <Mark $x={180} $y={-1} $w={82} $h={38} />
      <Mark $x={181} $y={186} $w={504} $h={53} />
      <Pointer width="16" height="26" viewBox="0 0 16 26" aria-hidden="true"><path d="M1 1v20l4-4 3.500 8 3-1.500L8 16h6z" fill="#fff" stroke="#000" /></Pointer>
    </Shell>
  );
}
